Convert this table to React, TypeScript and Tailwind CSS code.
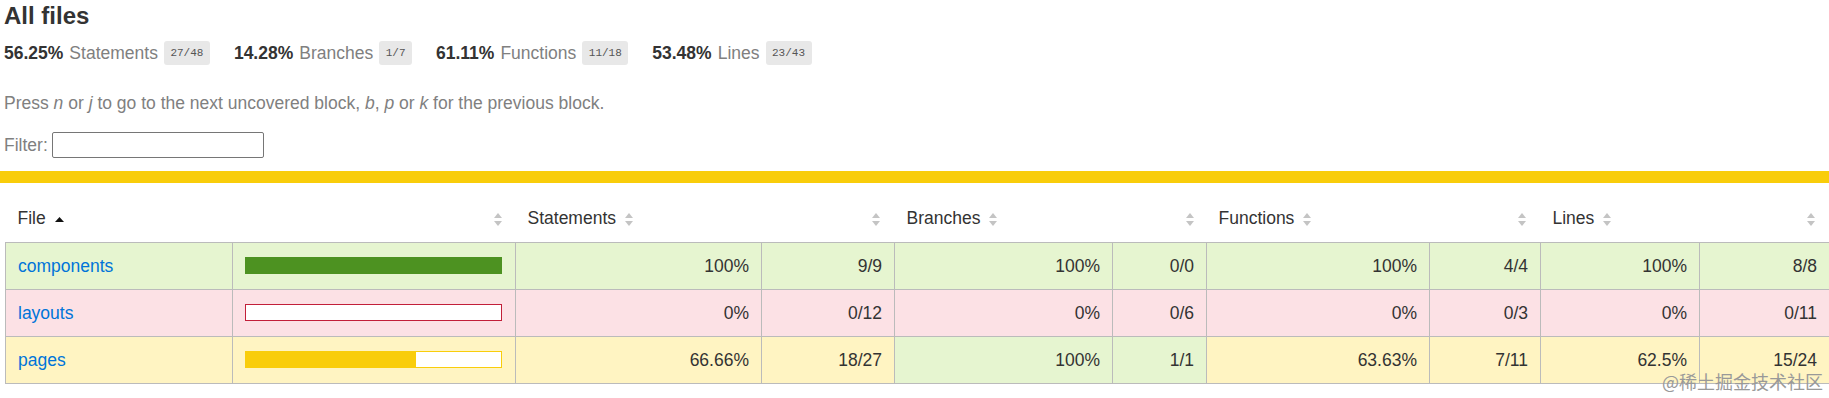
import React from 'react';

type Level = 'high' | 'medium' | 'low';

const bg: Record<Level, string> = {
  high: 'bg-[#e6f5d0]',
  medium: 'bg-[#fff4c2]',
  low: 'bg-[#fce1e5]'
};

const chartBorder: Record<Level, string> = {
  high: 'border-[#4d9221]',
  medium: 'border-[#f9cd0b]',
  low: 'border-[#c21f39]'
};

const chartFill: Record<Level, string> = {
  high: 'bg-[#4d9221]',
  medium: 'bg-[#f9cd0b]',
  low: 'bg-[#c21f39]'
};

type Metric = { pct: string; abs: string; level: Level };

type Row = {
  name: string;
  level: Level;
  fill: number;
  statements: Metric;
  branches: Metric;
  functions: Metric;
  lines: Metric;
};

const rows: Row[] = [
  {
    name: 'components',
    level: 'high',
    fill: 100,
    statements: { pct: '100%', abs: '9/9', level: 'high' },
    branches: { pct: '100%', abs: '0/0', level: 'high' },
    functions: { pct: '100%', abs: '4/4', level: 'high' },
    lines: { pct: '100%', abs: '8/8', level: 'high' }
  },
  {
    name: 'layouts',
    level: 'low',
    fill: 0,
    statements: { pct: '0%', abs: '0/12', level: 'low' },
    branches: { pct: '0%', abs: '0/6', level: 'low' },
    functions: { pct: '0%', abs: '0/3', level: 'low' },
    lines: { pct: '0%', abs: '0/11', level: 'low' }
  },
  {
    name: 'pages',
    level: 'medium',
    fill: 66.66,
    statements: { pct: '66.66%', abs: '18/27', level: 'medium' },
    branches: { pct: '100%', abs: '1/1', level: 'high' },
    functions: { pct: '63.63%', abs: '7/11', level: 'medium' },
    lines: { pct: '62.5%', abs: '15/24', level: 'medium' }
  }
];

const summary = [
  { pct: '56.25%', label: 'Statements', frac: '27/48' },
  { pct: '14.28%', label: 'Branches', frac: '1/7' },
  { pct: '61.11%', label: 'Functions', frac: '11/18' },
  { pct: '53.48%', label: 'Lines', frac: '23/43' }
];

function Sorter() {
  return (
    <svg width="8" height="13" viewBox="0 0 8 13" className="inline-block align-middle">
      <polygon points="4,0 8,5 0,5" fill="#c4c4c4" />
      <polygon points="0,8 8,8 4,13" fill="#c4c4c4" />
    </svg>
  );
}

function SortedAsc() {
  return (
    <svg width="9" height="5" viewBox="0 0 9 5" className="inline-block align-middle">
      <polygon points="4.5,0 9,5 0,5" fill="#111111" />
    </svg>
  );
}

function Chart({ level, fill }: { level: Level; fill: number }) {
  return (
    <div className={`h-[17px] w-[257px] border bg-white ${chartBorder[level]}`}>
      <div className={`h-full ${chartFill[level]}`} style={{ width: `${fill}%` }} />
    </div>
  );
}

function MetricCells({ m }: { m: Metric }) {
  return (
    <>
      <td className={`border border-[#bbbbbb] pr-[12px] text-right ${bg[m.level]}`}>{m.pct}</td>
      <td className={`border border-[#bbbbbb] pr-[12px] text-right ${bg[m.level]}`}>{m.abs}</td>
    </>
  );
}

export default function App() {
  return (
    <div className="relative h-[398px] w-[1829px] overflow-hidden bg-white font-['Liberation_Sans',Arial,sans-serif] text-[17.5px] text-[#333333]">
      <div className="pl-[4px] pt-[2px]">
        <h1 className="text-[24px] font-bold leading-[27px]">All files</h1>

        <div className="mt-[12px] flex h-[24px] items-center">
          {summary.map((s) => (
            <div key={s.label} className="mr-[24px] flex items-center leading-[20px]">
              <span className="font-bold">{s.pct}</span>
              <span className="ml-[6px] text-[#808080]">{s.label}</span>
              <span className="ml-[6px] rounded-[3px] bg-[#e8e8e8] px-[6.5px] py-[5px] font-['Liberation_Mono',monospace] text-[11px] leading-[14px] text-[#555555]">
                {s.frac}
              </span>
            </div>
          ))}
        </div>

        <p className="mt-[28px] leading-[20px] text-[#808080]">
          Press <em>n</em> or <em>j</em> to go to the next uncovered block, <em>b</em>, <em>p</em> or <em>k</em> for the
          previous block.
        </p>

        <div className="mt-[19px] flex h-[26px] items-center leading-[20px] text-[#808080]">
          <span>Filter:</span>
          <input
            type="search"
            className="ml-[4px] h-[26px] w-[212px] rounded-[2px] border border-[#767676] bg-white outline-none"
          />
        </div>
      </div>

      <div className="mt-[13px] h-[12px] w-full bg-[#f9cd0b]" />

      <table className="ml-[5px] mt-[11px] w-[1824px] table-fixed border-collapse leading-[20px]">
        <colgroup>
          <col className="w-[227px]" />
          <col className="w-[283px]" />
          <col className="w-[246px]" />
          <col className="w-[133px]" />
          <col className="w-[218px]" />
          <col className="w-[94px]" />
          <col className="w-[223px]" />
          <col className="w-[111px]" />
          <col className="w-[159px]" />
          <col className="w-[130px]" />
        </colgroup>
        <thead>
          <tr className="h-[48px]">
            <th className="pl-[12px] text-left font-normal">
              File <span className="ml-[4px]"><SortedAsc /></span>
            </th>
            <th className="pr-[14px] text-right font-normal">
              <Sorter />
            </th>
            <th className="pl-[12px] text-left font-normal">
              Statements <span className="ml-[4px]"><Sorter /></span>
            </th>
            <th className="pr-[15px] text-right font-normal">
              <Sorter />
            </th>
            <th className="pl-[12px] text-left font-normal">
              Branches <span className="ml-[4px]"><Sorter /></span>
            </th>
            <th className="pr-[13px] text-right font-normal">
              <Sorter />
            </th>
            <th className="pl-[12px] text-left font-normal">
              Functions <span className="ml-[4px]"><Sorter /></span>
            </th>
            <th className="pr-[15px] text-right font-normal">
              <Sorter />
            </th>
            <th className="pl-[12px] text-left font-normal">
              Lines <span className="ml-[4px]"><Sorter /></span>
            </th>
            <th className="pr-[15px] text-right font-normal">
              <Sorter />
            </th>
          </tr>
        </thead>
        <tbody>
          {rows.map((r) => (
            <tr key={r.name} className="h-[47px]">
              <td className={`border border-[#bbbbbb] pl-[12px] ${bg[r.level]}`}>
                <a href="#" className="text-[#0074d9]">{r.name}</a>
              </td>
              <td className={`border border-[#bbbbbb] pl-[12px] ${bg[r.level]}`}>
                <Chart level={r.level} fill={r.fill} />
              </td>
              <MetricCells m={r.statements} />
              <MetricCells m={r.branches} />
              <MetricCells m={r.functions} />
              <MetricCells m={r.lines} />
            </tr>
          ))}
        </tbody>
      </table>

      <div className="absolute right-[6px] top-[369px] font-['Noto_Sans_CJK_SC',sans-serif] text-[18px] leading-[24px] text-[#999999]">
        @稀土掘金技术社区
      </div>
    </div>
  );
}
